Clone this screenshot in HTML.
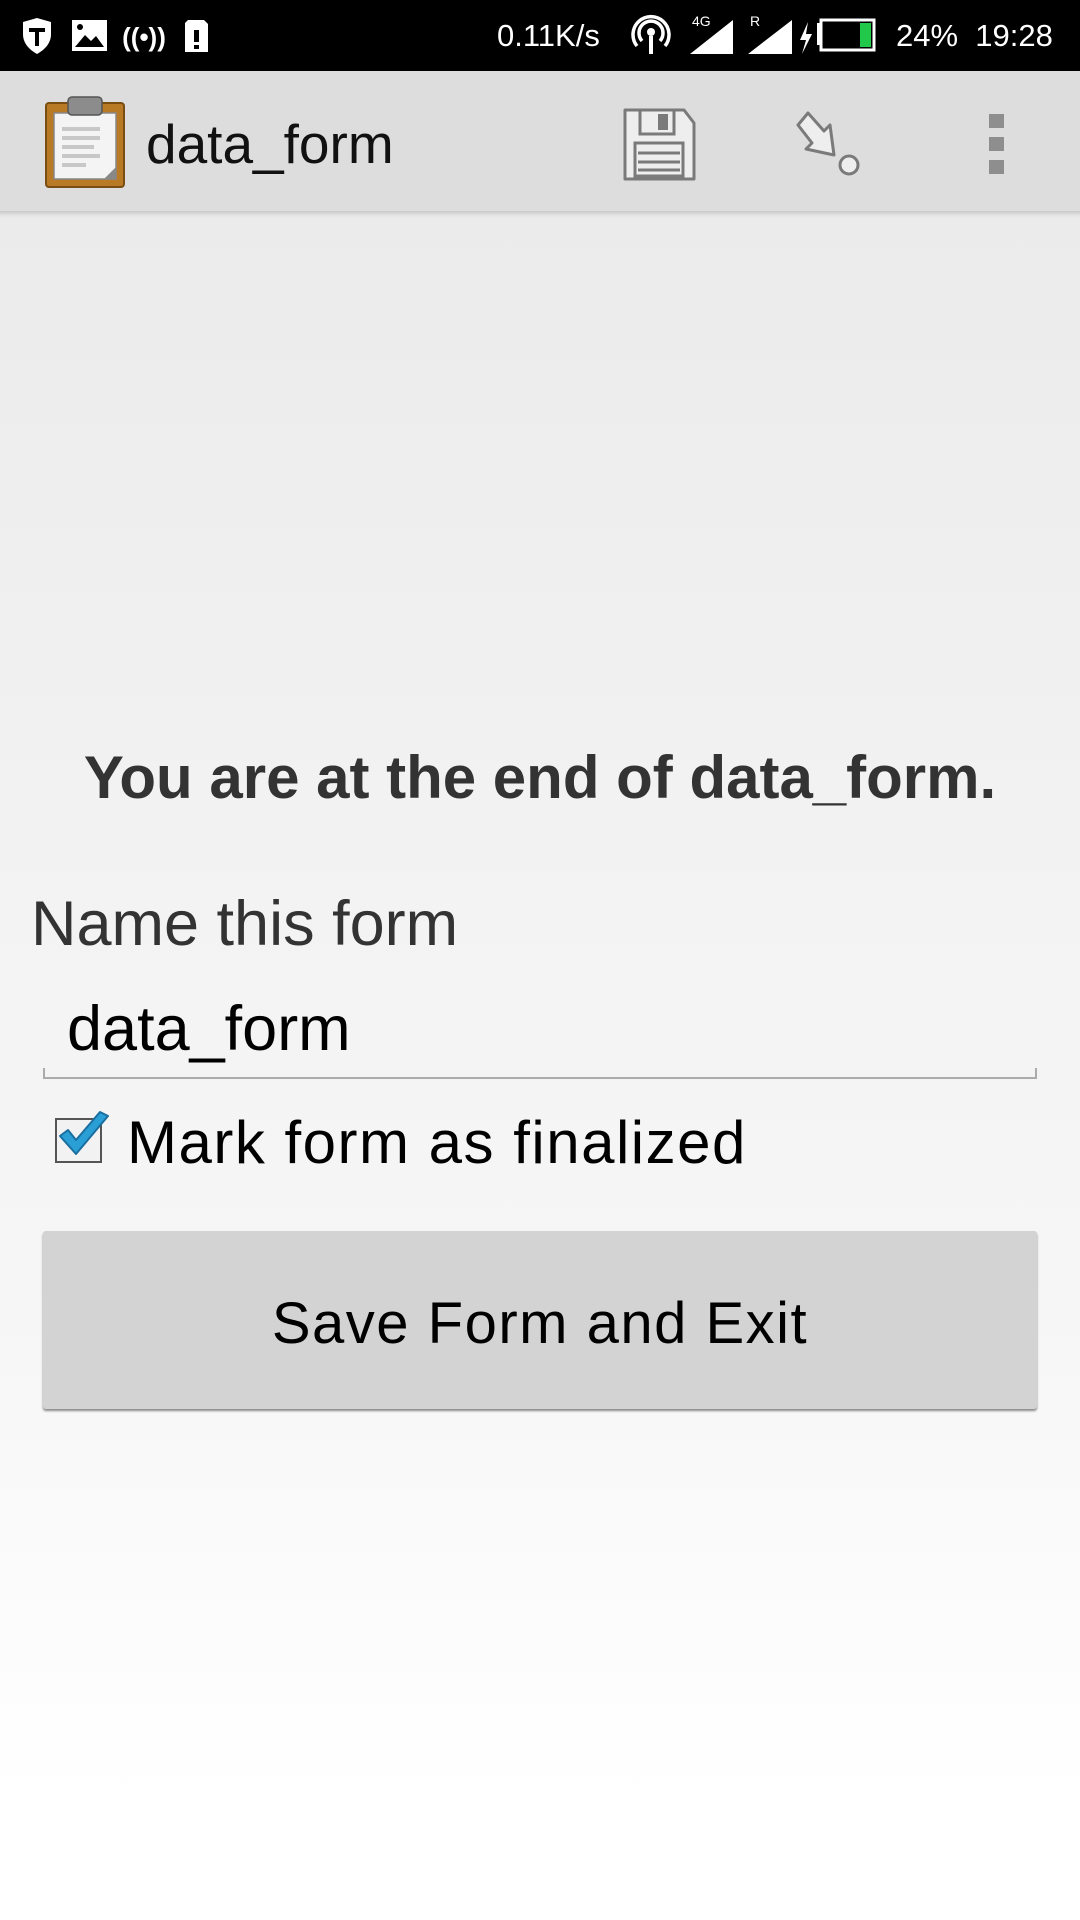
<!DOCTYPE html>
<html><head><meta charset="utf-8"><style>
*{margin:0;padding:0;box-sizing:border-box}
body{width:1080px;height:1920px;overflow:hidden;font-family:"Liberation Sans",sans-serif;background:linear-gradient(#ebebeb 220px,#f3f3f3 900px,#f6f6f6 1300px,#ffffff 1800px);position:relative}
.abs{position:absolute}
#sb{left:0;top:0;width:1080px;height:71px;background:#000;color:#fff}
#tb{left:0;top:71px;width:1080px;height:140px;background:#dddddd}
#sh{left:0;top:211px;width:1080px;height:8px;background:linear-gradient(#c9c9c9,#e6e6e6 60%,rgba(235,235,235,0))}
.t{white-space:nowrap;line-height:1}
</style></head><body>
<div id="sb" class="abs">
  <svg class="abs" style="left:20px;top:16px" width="200" height="40" viewBox="0 0 200 40">
    <path d="M3 6 L17 2 L31 6 L31 18 C31 28 24 34 17 38 C10 34 3 28 3 18Z" fill="#fff"/>
    <path d="M9 12 L25 12 L25 16 L19 16 L19 30 L15 30 L15 16 L9 16Z" fill="#000"/>
    <rect x="52" y="4" width="35" height="31" fill="#fff"/>
    <path d="M55 31 L65 19 L71 25 L76 20 L84 31Z" fill="#000"/><circle cx="60" cy="11" r="3" fill="#000"/>
    <text x="124" y="30" font-size="26" fill="#fff" font-family="Liberation Sans" font-weight="bold" text-anchor="middle">((•))</text>
    <path d="M168 4 L184 4 L188 8 L188 36 L165 36 L165 7Z" fill="#fff"/>
    <rect x="174" y="14" width="5" height="12" fill="#000"/><rect x="174" y="29" width="5" height="4" fill="#000"/>
  </svg>
  <div class="abs t" style="left:497px;top:20px;font-size:31px">0.11K/s</div>
  <svg class="abs" style="left:630px;top:10px" width="265" height="50" viewBox="0 0 265 50">
    <circle cx="21" cy="22" r="4" fill="#fff"/><path d="M21 26 L21 44" stroke="#fff" stroke-width="4"/>
    <path d="M12 31 A12 12 0 1 1 30 31" stroke="#fff" stroke-width="3.5" fill="none"/>
    <path d="M7 36 A18 18 0 1 1 35 36" stroke="#fff" stroke-width="3.5" fill="none"/>
    <text x="62" y="16" font-size="14" fill="#fff" font-family="Liberation Sans">4G</text>
    <path d="M60 44 L103 44 L103 10 Z" fill="#fff"/>
    <text x="120" y="16" font-size="14" fill="#fff" font-family="Liberation Sans">R</text>
    <path d="M118 44 L162 44 L162 10 Z" fill="#fff"/>
    <path d="M178 12 L170 30 L176 30 L172 44 L182 24 L176 24 Z" fill="#fff"/>
    <rect x="187" y="13" width="5" height="22" fill="#fff"/>
    <rect x="191" y="10" width="53" height="30" fill="none" stroke="#fff" stroke-width="3"/>
    <rect x="230" y="13" width="11" height="24" fill="#22c84a"/>
  </svg>
  <div class="abs t" style="left:896px;top:20px;font-size:31px">24%&nbsp; 19:28</div>
</div>
<div id="tb" class="abs">
  <svg class="abs" style="left:44px;top:24px" width="84" height="94" viewBox="0 0 84 94">
    <rect x="2" y="8" width="78" height="84" rx="3" fill="#b87a24" stroke="#7a4e12" stroke-width="2"/>
    <rect x="10" y="18" width="62" height="66" fill="#f4f4f4" stroke="#888" stroke-width="1.5"/>
    <rect x="24" y="2" width="34" height="18" rx="4" fill="#8c8c8c" stroke="#555" stroke-width="1.5"/>
    <g fill="#c8c8c8"><rect x="18" y="32" width="38" height="4"/><rect x="18" y="41" width="38" height="4"/><rect x="18" y="50" width="32" height="4"/><rect x="18" y="59" width="38" height="4"/><rect x="18" y="68" width="24" height="4"/></g>
    <path d="M60 84 L72 72 L72 84Z" fill="#888"/>
  </svg>
  <div class="abs t" style="left:146px;top:46px;font-size:55px;color:#111">data_form</div>
  <svg class="abs" style="left:622px;top:36px" width="76" height="76" viewBox="0 0 76 76">
    <path d="M3 3 L62 3 L72 16 L72 72 L3 72Z" fill="#eeeeee" stroke="#7a7a7a" stroke-width="3" stroke-linejoin="round"/>
    <rect x="18" y="3" width="34" height="24" fill="#eee" stroke="#7a7a7a" stroke-width="3"/>
    <rect x="36" y="7" width="10" height="16" fill="#7a7a7a"/>
    <rect x="13" y="36" width="48" height="33" fill="#eee" stroke="#7a7a7a" stroke-width="3"/>
    <g stroke="#7a7a7a" stroke-width="3"><path d="M16 46 H58 M16 55 H58 M16 63 H58"/></g>
  </svg>
  <svg class="abs" style="left:794px;top:38px" width="70" height="70" viewBox="0 0 70 70">
    <path d="M4 16 L14 4 L30 22 L36 16 L40 46 L12 40 L18 34 Z" fill="#eee" stroke="#7a7a7a" stroke-width="3" stroke-linejoin="round"/>
    <circle cx="55" cy="56" r="9" fill="#eee" stroke="#7a7a7a" stroke-width="3"/>
  </svg>
  <div class="abs" style="left:989px;top:43px;width:15px;height:14px;background:#8e8e8e"></div>
  <div class="abs" style="left:989px;top:66px;width:15px;height:14px;background:#8e8e8e"></div>
  <div class="abs" style="left:989px;top:89px;width:15px;height:14px;background:#8e8e8e"></div>
</div>
<div id="sh" class="abs"></div>

<div class="abs t" style="left:0;width:1080px;top:748px;text-align:center;font-size:60px;font-weight:bold;color:#333">You are at the end of data_form.</div>
<div class="abs t" style="left:31px;top:893px;font-size:63px;color:#333">Name this form</div>
<div class="abs t" style="left:67px;top:998px;font-size:63px;color:#000">data_form</div>
<div class="abs" style="left:43px;top:1068px;width:994px;height:11px;border:2px solid #ababab;border-top:none"></div>
<div class="abs" style="left:55px;top:1118px;width:47px;height:45px;border:2px solid #555;background:#f2f2f2"></div>
<svg class="abs" style="left:56px;top:1108px" width="58" height="52" viewBox="0 0 58 52">
  <path d="M4 28 L12 22 L20 32 L44 4 L52 8 L20 46 Z" fill="#2a9fd6" stroke="#1a6fa0" stroke-width="2" stroke-linejoin="round"/>
</svg>
<div class="abs t" style="left:127px;top:1113px;font-size:60px;color:#000;letter-spacing:1.5px">Mark form as finalized</div>
<div class="abs" style="left:43px;top:1231px;width:994px;height:178px;background:#d3d3d3;border-radius:3px;box-shadow:0 2px 2px #888"></div>
<div class="abs t" style="left:43px;width:994px;top:1295px;text-align:center;font-size:58px;color:#000;letter-spacing:1.5px">Save Form and Exit</div>
</body></html>
